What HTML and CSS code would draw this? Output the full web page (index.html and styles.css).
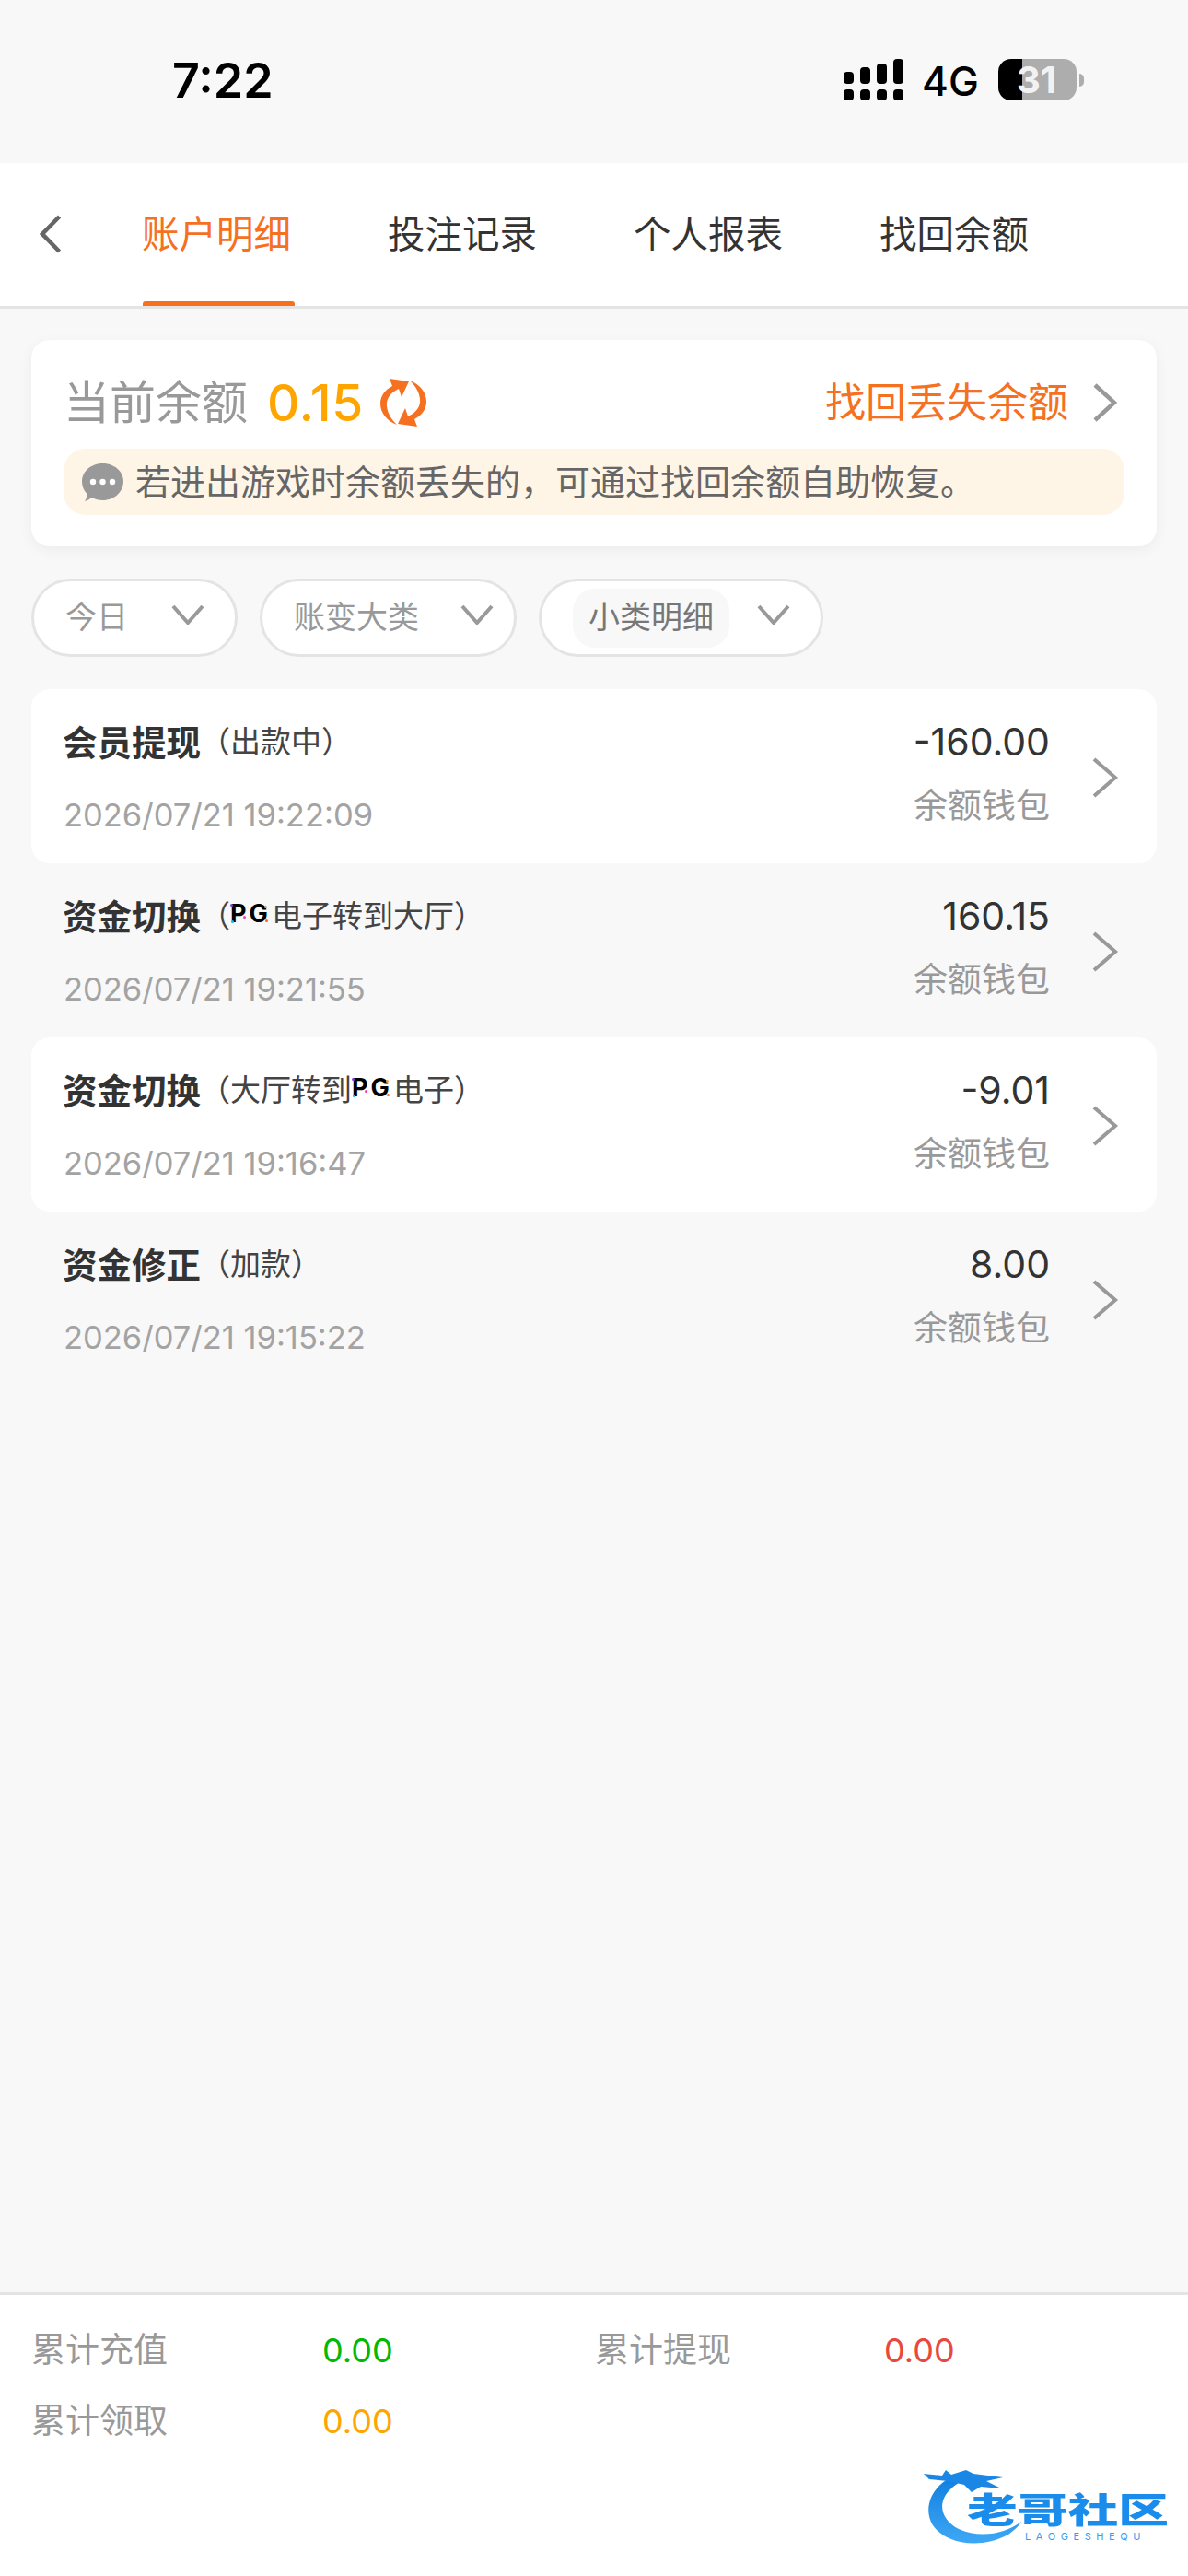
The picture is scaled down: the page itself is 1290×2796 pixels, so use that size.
FILE: index.html
```html
<!DOCTYPE html>
<html lang="zh-CN">
<head>
<meta charset="utf-8">
<title>账户明细</title>
<link rel="stylesheet" href="styles.css">
</head>
<body>
<div class="page">
  <header class="status">
    <div class="clock">7:22</div>
    <div class="status-right">
      <div class="signal">
        <div class="sig-col"><i class="sig-top h1"></i><i class="sig-dot"></i></div>
        <div class="sig-col"><i class="sig-top h2"></i><i class="sig-dot"></i></div>
        <div class="sig-col"><i class="sig-top h3"></i><i class="sig-dot"></i></div>
        <div class="sig-col"><i class="sig-top h4"></i><i class="sig-dot"></i></div>
      </div>
      <div class="net">4G</div>
      <div class="battery"><div class="batt-body"><span class="batt-text">31</span></div><div class="batt-cap"></div></div>
    </div>
  </header>

  <nav class="tabs">
    <svg class="back" width="24" height="42" viewBox="0 0 24 42"><path d="M21.5 2 L3 21 L21.5 40" fill="none" stroke="#666" stroke-width="4.5"/></svg>
    <div class="tab-list">
      <div class="tab active">账户明细</div>
      <div class="tab">投注记录</div>
      <div class="tab">个人报表</div>
      <div class="tab">找回余额</div>
    </div>
  </nav>

  <main class="main">
    <section class="balance">
      <div class="balance-top">
        <div class="balance-left">
          <span class="balance-label">当前余额</span>
          <span class="balance-value">0.15</span>
          <svg class="refresh" width="50" height="52" viewBox="0 0 50 52"><g fill="#f5701f"><path d="M10 0 L31 3 L23 20 L20 11 C11 15 6 22 7 30 C8 38 12 44 18 50 C7 46 0 37 0 27 C0 19 5 12 13 8 Z"/><path d="M10 0 L31 3 L23 20 L20 11 C11 15 6 22 7 30 C8 38 12 44 18 50 C7 46 0 37 0 27 C0 19 5 12 13 8 Z" transform="rotate(180 25 26)"/></g></svg>
        </div>
        <div class="balance-right">
          <span class="recover">找回丢失余额</span>
          <svg class="chev-lg" width="26" height="42" viewBox="0 0 26 42"><path d="M2 2 L23 21 L2 40" fill="none" stroke="#999" stroke-width="4.5"/></svg>
        </div>
      </div>
      <div class="notice">
        <svg class="chat" width="45" height="41" viewBox="0 0 45 41"><path d="M22.5 0 C35 0 45 8.5 45 19.5 C45 31 35 40 22.5 40 C18 40 14 39 11 37 C8 39 6 40 3 41 C5 38 5.5 35 5.5 33 C2 29.5 0 25 0 19.5 C0 8.5 10 0 22.5 0 Z" fill="#999"/><circle cx="12" cy="20" r="3.2" fill="#fff"/><circle cx="22.5" cy="20" r="3.2" fill="#fff"/><circle cx="33" cy="20" r="3.2" fill="#fff"/></svg>
        <span class="notice-text">若进出游戏时余额丢失的&#xFF0C;可通过找回余额自助恢复。</span>
      </div>
    </section>

    <section class="filters">
      <div class="pill pill-day"><span class="pill-text">今日</span><svg class="pill-chev" width="36" height="22" viewBox="0 0 36 22"><path d="M2 2 L18 20 L34 2" fill="none" stroke="#999" stroke-width="4"/></svg></div>
      <div class="pill pill-major"><span class="pill-text">账变大类</span><svg class="pill-chev" width="36" height="22" viewBox="0 0 36 22"><path d="M2 2 L18 20 L34 2" fill="none" stroke="#999" stroke-width="4"/></svg></div>
      <div class="pill pill-minor"><span class="pill-text pill-chip">小类明细</span><svg class="pill-chev" width="36" height="22" viewBox="0 0 36 22"><path d="M2 2 L18 20 L34 2" fill="none" stroke="#999" stroke-width="4"/></svg></div>
    </section>

    <section class="list">
      <article class="row row-white">
        <div class="row-left">
          <div class="row-title"><b>会员提现</b><span class="row-sub">&#xFF08;出款中&#xFF09;</span></div>
          <div class="row-date">2026/07/21 19:22:09</div>
        </div>
        <div class="row-right"><div class="amount">-160.00</div><div class="wallet">余额钱包</div></div>
        <svg class="chev-row" width="30" height="44" viewBox="0 0 30 44"><path d="M3 2 L26 22 L3 42" fill="none" stroke="#999" stroke-width="4"/></svg>
      </article>
      <article class="row">
        <div class="row-left">
          <div class="row-title"><b>资金切换</b><span class="row-sub">&#xFF08;<span class="pg">PG<i class="sp s1"></i><i class="sp s2"></i><i class="sp s3"></i><i class="sp s4"></i><i class="sp s5"></i></span>电子转到大厅&#xFF09;</span></div>
          <div class="row-date">2026/07/21 19:21:55</div>
        </div>
        <div class="row-right"><div class="amount">160.15</div><div class="wallet">余额钱包</div></div>
        <svg class="chev-row" width="30" height="44" viewBox="0 0 30 44"><path d="M3 2 L26 22 L3 42" fill="none" stroke="#999" stroke-width="4"/></svg>
      </article>
      <article class="row row-white">
        <div class="row-left">
          <div class="row-title"><b>资金切换</b><span class="row-sub">&#xFF08;大厅转到<span class="pg">PG<i class="sp s1"></i><i class="sp s2"></i><i class="sp s3"></i><i class="sp s4"></i><i class="sp s5"></i></span>电子&#xFF09;</span></div>
          <div class="row-date">2026/07/21 19:16:47</div>
        </div>
        <div class="row-right"><div class="amount">-9.01</div><div class="wallet">余额钱包</div></div>
        <svg class="chev-row" width="30" height="44" viewBox="0 0 30 44"><path d="M3 2 L26 22 L3 42" fill="none" stroke="#999" stroke-width="4"/></svg>
      </article>
      <article class="row">
        <div class="row-left">
          <div class="row-title"><b>资金修正</b><span class="row-sub">&#xFF08;加款&#xFF09;</span></div>
          <div class="row-date">2026/07/21 19:15:22</div>
        </div>
        <div class="row-right"><div class="amount">8.00</div><div class="wallet">余额钱包</div></div>
        <svg class="chev-row" width="30" height="44" viewBox="0 0 30 44"><path d="M3 2 L26 22 L3 42" fill="none" stroke="#999" stroke-width="4"/></svg>
      </article>
    </section>
  </main>

  <footer class="summary">
    <div class="summary-grid">
      <span class="sum-label">累计充值</span><span class="sum-val green">0.00</span>
      <span class="sum-label">累计提现</span><span class="sum-val red">0.00</span>
      <span class="sum-label">累计领取</span><span class="sum-val orange">0.00</span>
    </div>
    <div class="watermark">
      <svg class="dragon" width="130" height="92" viewBox="0 0 130 92">
        <defs><linearGradient id="dg" x1="0" y1="0" x2="0" y2="1"><stop offset="0" stop-color="#1280e0"/><stop offset="1" stop-color="#3ea8f5"/></linearGradient></defs>
        <path d="M26 18 C6 30 0 52 10 68 C22 86 58 96 92 78 C100 72 104 68 106 64 C88 78 60 82 38 72 C18 62 14 42 30 28 C36 22 42 20 46 18 Z" fill="url(#dg)"/>
        <path d="M0 12 L20 14 L24 8 L30 13 L46 8 L54 12 L86 16 L68 20 L84 28 L62 26 L52 32 L44 24 L26 20 L6 18 Z" fill="#1a86e6"/>
      </svg>
      <div class="wm-name">老哥社区</div>
      <div class="wm-sub">LAOGESHEQU</div>
    </div>
  </footer>
</div>
</body>
</html>
```
FILE: styles.css
```css
* { box-sizing: border-box; }
html, body { margin: 0; padding: 0; }
body {
  font-family: "Inter", "Noto Sans CJK SC", sans-serif;
  background: #f8f8f8;
  color: #333;
}
.page { width: 1290px; height: 2796px; display: flex; flex-direction: column; position: relative; overflow: hidden; }

/* status bar */
.status { height: 177px; display: flex; justify-content: space-between; align-items: flex-start; padding-left: 187px; }
.clock { font-family: "Inter", sans-serif; font-size: 52px; font-weight: 600; line-height: 60px; margin-top: 58px; color: #000; }
.status-right { display: flex; align-items: flex-start; margin-top: 64px; margin-right: 113px; }
.signal { display: flex; gap: 7px; }
.sig-col { width: 11px; height: 45px; display: flex; flex-direction: column; justify-content: flex-end; gap: 6px; }
.sig-col i { display: block; background: #000; border-radius: 4px; }
.sig-dot { height: 12px; }
.h1 { height: 13px; }
.h2 { height: 18px; }
.h3 { height: 22px; }
.h4 { height: 27px; }
.net { font-family: "Inter", sans-serif; font-size: 44px; font-weight: 500; line-height: 45px; margin-left: 20px; margin-top: 2px; color: #000; width: 83px; }
.battery { display: flex; align-items: center; height: 45px; }
.batt-body { width: 85px; height: 45px; border-radius: 14px; background: linear-gradient(90deg, #000 0 26px, #adadad 26px); display: flex; align-items: center; justify-content: center; }
.batt-text { font-family: "Inter", sans-serif; font-size: 40px; font-weight: 700; color: #f2f2f2; line-height: 45px; margin-right: 2px; }
.batt-cap { width: 5px; height: 14px; margin-left: 3px; background: #adadad; border-radius: 0 7px 7px 0; }

/* tabs */
.tabs { height: 158px; background: #fff; border-bottom: 3px solid #e4e4e4; display: flex; align-items: stretch; }
.back { align-self: center; margin-left: 43px; margin-top: -2px; flex: none; }
.tab-list { display: flex; gap: 99px; margin-left: 87px; }
.tab { position: relative; font-size: 40.5px; width: 168px; line-height: 155px; color: #333; white-space: nowrap; }
.tab.active { color: #f5701f; }
.tab.active::after { content: ""; position: absolute; left: 1px; bottom: 0; width: 165px; height: 5px; background: #f5701f; border-radius: 3px 3px 0 0; }

/* main */
.main { flex: 1; padding: 34px 34px 0; display: flex; flex-direction: column; }
.balance { height: 224px; background: #fff; border-radius: 20px; box-shadow: 0 4px 16px rgba(0,0,0,.05); padding: 44px 35px 0; }
.balance-top { height: 48px; display: flex; justify-content: space-between; align-items: center; }
.balance-left { display: flex; align-items: center; }
.balance-label { font-size: 50px; color: #999; line-height: 48px; }
.balance-value { width: 103px; font-size: 55px; font-weight: 500; letter-spacing: .5px; color: #ffa500; line-height: 48px; margin-left: 21px; white-space: nowrap; }
.refresh { margin-left: 20px; flex: none; }
.balance-right { display: flex; align-items: center; padding-right: 8px; }
.recover { font-size: 44px; line-height: 48px; color: #f5701f; }
.chev-lg { margin-left: 27px; flex: none; }
.notice { margin-top: 26px; height: 72px; background: #fef5e7; border-radius: 24px; display: flex; align-items: center; padding-left: 20px; }
.chat { flex: none; }
.notice-text { font-size: 38px; color: #666; margin-left: 13px; white-space: nowrap; line-height: 72px; }

/* filters */
.filters { display: flex; gap: 24px; margin-top: 35px; }
.pill { height: 85px; background: #fff; border: 3px solid #e4e4e4; border-radius: 43px; display: flex; align-items: center; justify-content: space-between; padding: 0 33px 0 34px; }
.pill-day { width: 224px; }
.pill-major { width: 279px; padding-right: 22px; }
.pill-minor { width: 309px; }
.pill-text { font-size: 34px; line-height: 48px; color: #999; white-space: nowrap; margin-top: -2px; }
.pill-chip { background: #f8f8f8; border-radius: 24px; color: #777; height: 64px; line-height: 62px; padding: 0 17px; margin-top: 0; }
.pill-chev { flex: none; margin-top: -8px; }

/* list */
.list { margin-top: 35px; display: flex; flex-direction: column; }
.row { height: 189px; border-radius: 20px; display: flex; align-items: flex-start; padding: 32px 41px 0 34px; }
.row-white { background: #fff; }
.row-left { flex: 1; min-width: 0; }
.row-title { display: flex; align-items: center; height: 46px; white-space: nowrap; }
.row-title b { font-size: 37.5px; font-weight: 700; color: #333; }
.row-sub { font-size: 33px; color: #444; display: flex; align-items: center; margin-left: -1px; }
.pg { position: relative; flex: none; width: 42px; margin-right: 3px; font-family: "Inter", sans-serif; font-size: 27px; font-weight: 700; line-height: 22px; letter-spacing: 3px; color: #000; white-space: nowrap; }
.sp { position: absolute; width: 3px; height: 3px; border-radius: 50%; }
.s1 { left: 0; top: 0; background: #7b3ff2; }
.s2 { left: 1px; top: 18px; background: #19b5ef; }
.s3 { left: 14px; top: 13px; background: #f03fa6; }
.s4 { left: 37px; top: 2px; background: #f79a2a; }
.s5 { left: 38px; top: 17px; background: #f0682a; }
.row-date { margin-top: 35px; padding-left: 1px; font-size: 34.5px; line-height: 48px; color: #a3a3a3; white-space: nowrap; }
.row-right { text-align: right; padding-top: 1px; }
.amount { font-size: 41px; line-height: 48px; color: #333; }
.wallet { margin-top: 22px; font-size: 37px; line-height: 48px; color: #999; }
.chev-row { flex: none; margin: 42px 0 0 45px; }

/* footer */
.summary { height: 308px; background: #fff; border-top: 3px solid #e4e4e4; padding: 35px 0 0 34px; position: relative; }
.summary-grid { display: grid; grid-template-columns: 316px 296px 314px auto; row-gap: 27px; justify-content: start; }
.sum-label { font-size: 37px; line-height: 50px; color: #999; }
.sum-val { font-size: 36px; line-height: 50px; }
.green { color: #00b900; }
.red { color: #e8493c; }
.orange { color: #ffa500; }

/* watermark overlay */
.watermark { position: absolute; left: 1003px; top: 182px; width: 270px; height: 92px; }
.dragon { position: absolute; left: 0; top: 0; filter: blur(.5px); }
.wm-name { position: absolute; left: 47px; top: 32px; font-size: 46px; line-height: 46px; font-weight: 900; color: #1a8cec; white-space: nowrap; transform: scale(1.19, .82); transform-origin: left top; filter: blur(.6px); }
.wm-sub { position: absolute; left: 110px; top: 74px; font-family: "Inter", sans-serif; font-size: 11px; line-height: 12px; letter-spacing: 5.6px; color: #3a9cf0; white-space: nowrap; }
```
